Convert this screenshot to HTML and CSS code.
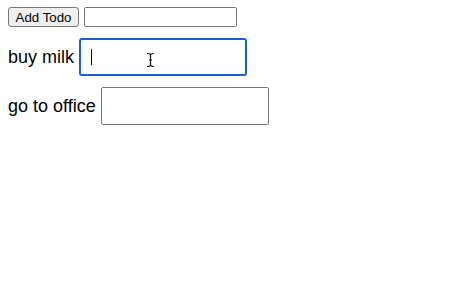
FILE: index.html
```html
<!DOCTYPE html>
<html lang="en">
<head>
    <meta charset="UTF-8">
    <meta name="viewport" content="width=device-width, initial-scale=1.0">
    <title>Todos</title>
    <link rel="stylesheet" href="styles.css">
</head>
<body>
    <div class="toolbar">
        <button class="add-btn">Add Todo</button>
        <input type="text" class="new-todo">
    </div>

    <div class="todo-list">
        <div class="todo">
            <span class="todo-text">buy milk</span>
            <div class="edit-wrap">
                <input type="text" class="todo-edit active">
                <span class="caret"></span>
                <svg class="ibeam" width="9" height="16" viewBox="0 0 9 16">
                    <path d="M1 1.5 Q4.5 1.5 4.5 3 L4.5 13 Q4.5 14.5 1 14.5 M8 1.5 Q4.5 1.5 4.5 3 M8 14.5 Q4.5 14.5 4.5 13 M3 8 L6 8" fill="none" stroke="#111" stroke-width="1.2"/>
                </svg>
            </div>
        </div>
        <div class="todo">
            <span class="todo-text">go to office</span>
            <div class="edit-wrap">
                <input type="text" class="todo-edit">
            </div>
        </div>
    </div>
</body>
</html>
```

FILE: styles.css
```css
body {
    margin: 7px 8px;
    font-family: "Liberation Sans", Arial, sans-serif;
    background: #fff;
}

.toolbar {
    display: flex;
    align-items: center;
    gap: 5px;
    height: 20px;
}

.add-btn {
    font-family: "Liberation Sans", Arial, sans-serif;
    font-size: 13.3px;
    color: #000;
    height: 20px;
    width: 71px;
    padding: 0;
    background: #efefef;
    border: 1px solid #767676;
    border-radius: 3px;
    box-sizing: border-box;
}

.new-todo {
    width: 153px;
    height: 20px;
    box-sizing: border-box;
    border: 1px solid #767676;
    border-radius: 2px;
    padding: 1px 2px;
    margin: 0;
}

.todo-list {
    display: flex;
    flex-direction: column;
    gap: 11px;
    margin-top: 11px;
}

.todo {
    display: flex;
    align-items: center;
    gap: 5px;
}

.todo-text {
    font-size: 18px;
    color: #000;
}

.edit-wrap {
    position: relative;
}

.todo-edit {
    display: block;
    width: 168px;
    height: 38px;
    box-sizing: border-box;
    border: 1px solid #767676;
    border-radius: 2px;
    margin: 0;
    font-size: 18px;
}

.todo-edit.active {
    border: 2px solid #1a5fd2;
    border-radius: 3px;
    outline: none;
}

.caret {
    position: absolute;
    left: 12px;
    top: 11px;
    width: 1px;
    height: 16px;
    background: #000;
}

.ibeam {
    position: absolute;
    left: 67px;
    top: 14px;
}
```
